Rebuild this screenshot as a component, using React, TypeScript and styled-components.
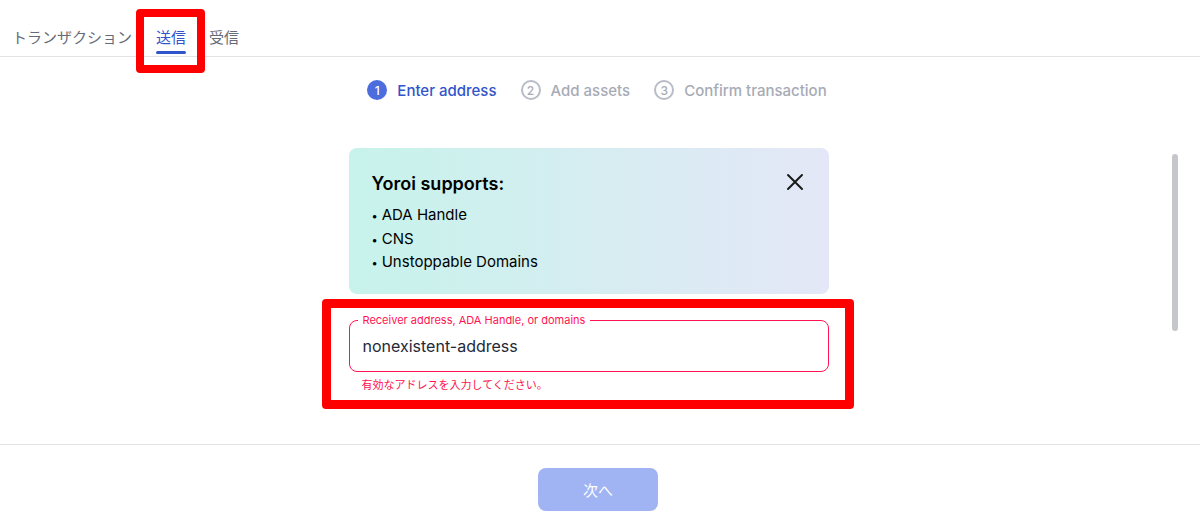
import React from "react";
import styled, { createGlobalStyle } from "styled-components";

const Global = createGlobalStyle`
  html, body { margin: 0; padding: 0; background: #ffffff; }
  body { font-family: Inter, "Noto Sans CJK JP", sans-serif; color: #242838; }
  * { box-sizing: border-box; }
`;

const Page = styled.div`
  width: 1200px;
  height: 530px;
  display: flex;
  flex-direction: column;
  overflow: hidden;
`;

const TabBar = styled.nav`
  height: 57px;
  display: flex;
  align-items: stretch;
  border-bottom: 1px solid #e2e3e7;
`;

const Tab = styled.div<{ $active?: boolean; $pl: number; $pr: number }>`
  position: relative;
  display: flex;
  align-items: center;
  padding: 16px ${(p) => p.$pr}px 0 ${(p) => p.$pl}px;
  font-family: "Noto Sans CJK JP", sans-serif;
  font-size: 15px;
  color: ${(p) => (p.$active ? "#3154cb" : "#666b78")};
  &::after {
    content: "";
    display: ${(p) => (p.$active ? "block" : "none")};
    position: absolute;
    left: ${(p) => p.$pl}px;
    right: ${(p) => p.$pr}px;
    bottom: 2px;
    height: 3px;
    border-radius: 2px;
    background: #3154cb;
  }
`;

const TabHighlight = styled.span`
  position: absolute;
  left: -8px;
  right: -7px;
  top: 9px;
  bottom: -17px;
  border: 8px solid #ff0000;
  border-radius: 4px;
  pointer-events: none;
`;

const Main = styled.main`
  position: relative;
  flex: 0 0 387px;
  display: flex;
  flex-direction: column;
  align-items: center;
  padding-top: 23px;
`;

const Stepper = styled.div`
  display: flex;
  align-items: center;
  gap: 24px;
  margin-left: -6px;
`;

const Step = styled.div<{ $active?: boolean }>`
  display: flex;
  align-items: center;
  gap: 10px;
  font-size: 15px;
  font-weight: 500;
  color: ${(p) => (p.$active ? "#3154cb" : "#a7abb6")};
`;

const StepNum = styled.span<{ $active?: boolean }>`
  width: 20px;
  height: 20px;
  border-radius: 50%;
  display: flex;
  align-items: center;
  justify-content: center;
  font-size: 12px;
  font-weight: 500;
  background: ${(p) => (p.$active ? "#4b6dde" : "transparent")};
  color: ${(p) => (p.$active ? "#ffffff" : "#a7abb6")};
  border: ${(p) => (p.$active ? "none" : "2px solid #b8bcc6")};
`;

const Column = styled.div`
  width: 480px;
  margin-top: 48px;
  margin-right: 23px;
  display: flex;
  flex-direction: column;
`;

const InfoCard = styled.div`
  position: relative;
  height: 146px;
  border-radius: 8px;
  padding: 24px 23px;
  background: linear-gradient(90deg, #c7f3eb 0%, #e4e7f7 100%);
`;

const InfoTitle = styled.h3`
  margin: 0;
  font-size: 18px;
  line-height: 24px;
  font-weight: 600;
  color: #000000;
`;

const InfoList = styled.ul`
  margin: 8px 0 0;
  padding: 0;
  list-style: none;
  font-size: 15px;
  line-height: 22.5px;
  color: #000000;
`;

const InfoItem = styled.li`
  &::before {
    content: "•";
    margin-right: 4px;
    font-size: 11px;
  }
`;

const CloseBtn = styled.button`
  position: absolute;
  top: 24px;
  right: 24px;
  width: 20px;
  height: 20px;
  padding: 0;
  border: none;
  background: none;
  display: flex;
  align-items: center;
  justify-content: center;
`;

const FieldGroup = styled.div`
  position: relative;
  margin-top: 26px;
`;

const FieldBox = styled.div`
  position: relative;
  height: 52px;
  border: 1.5px solid #ff1351;
  border-radius: 8px;
  display: flex;
  align-items: center;
  padding: 0 13px;
`;

const FieldLabel = styled.label`
  position: absolute;
  top: -8px;
  left: 8px;
  padding: 0 5px;
  background: #ffffff;
  font-size: 11px;
  line-height: 14px;
  color: #ff1351;
`;

const FieldValue = styled.span`
  font-size: 16px;
  color: #242838;
`;

const HelperText = styled.div`
  margin-top: 5px;
  padding-left: 13px;
  font-family: "Noto Sans CJK JP", sans-serif;
  font-size: 11px;
  line-height: 14px;
  color: #ff1351;
`;

const FieldHighlight = styled.span`
  position: absolute;
  top: -21px;
  left: -27px;
  right: -25px;
  bottom: -18px;
  border: 9px solid #ff0000;
  border-radius: 4px;
  pointer-events: none;
`;

const ScrollThumb = styled.div`
  position: absolute;
  top: 97px;
  right: 22px;
  width: 6px;
  height: 177px;
  border-radius: 3px;
  background: #c6c7cb;
`;

const Footer = styled.footer`
  flex: 1;
  border-top: 1px solid #e2e3e7;
  display: flex;
  justify-content: center;
  padding-top: 23px;
  padding-right: 4px;
`;

const NextButton = styled.button`
  width: 120px;
  height: 43px;
  border: none;
  border-radius: 8px;
  background: #a0b3f2;
  color: #ffffff;
  font-family: "Noto Sans CJK JP", sans-serif;
  font-size: 15px;
`;

export default function App() {
  return (
    <Page>
      <Global />
      <TabBar>
        <Tab $pl={12} $pr={12}>トランザクション</Tab>
        <Tab $active $pl={12} $pr={12}>
          送信
          <TabHighlight />
        </Tab>
        <Tab $pl={11} $pr={12}>受信</Tab>
      </TabBar>
      <Main>
        <Stepper>
          <Step $active>
            <StepNum $active>1</StepNum>
            Enter address
          </Step>
          <Step>
            <StepNum>2</StepNum>
            Add assets
          </Step>
          <Step>
            <StepNum>3</StepNum>
            Confirm transaction
          </Step>
        </Stepper>
        <Column>
          <InfoCard>
            <InfoTitle>Yoroi supports:</InfoTitle>
            <InfoList>
              <InfoItem>ADA Handle</InfoItem>
              <InfoItem>CNS</InfoItem>
              <InfoItem>Unstoppable Domains</InfoItem>
            </InfoList>
            <CloseBtn aria-label="close">
              <svg width="18" height="18" viewBox="0 0 18 18">
                <path d="M2 2 L16 16 M16 2 L2 16" stroke="#1a1a1a" strokeWidth="2" strokeLinecap="round" />
              </svg>
            </CloseBtn>
          </InfoCard>
          <FieldGroup>
            <FieldBox>
              <FieldLabel>Receiver address, ADA Handle, or domains</FieldLabel>
              <FieldValue>nonexistent-address</FieldValue>
            </FieldBox>
            <HelperText>有効なアドレスを入力してください。</HelperText>
            <FieldHighlight />
          </FieldGroup>
        </Column>
        <ScrollThumb />
      </Main>
      <Footer>
        <NextButton>次へ</NextButton>
      </Footer>
    </Page>
  );
}
